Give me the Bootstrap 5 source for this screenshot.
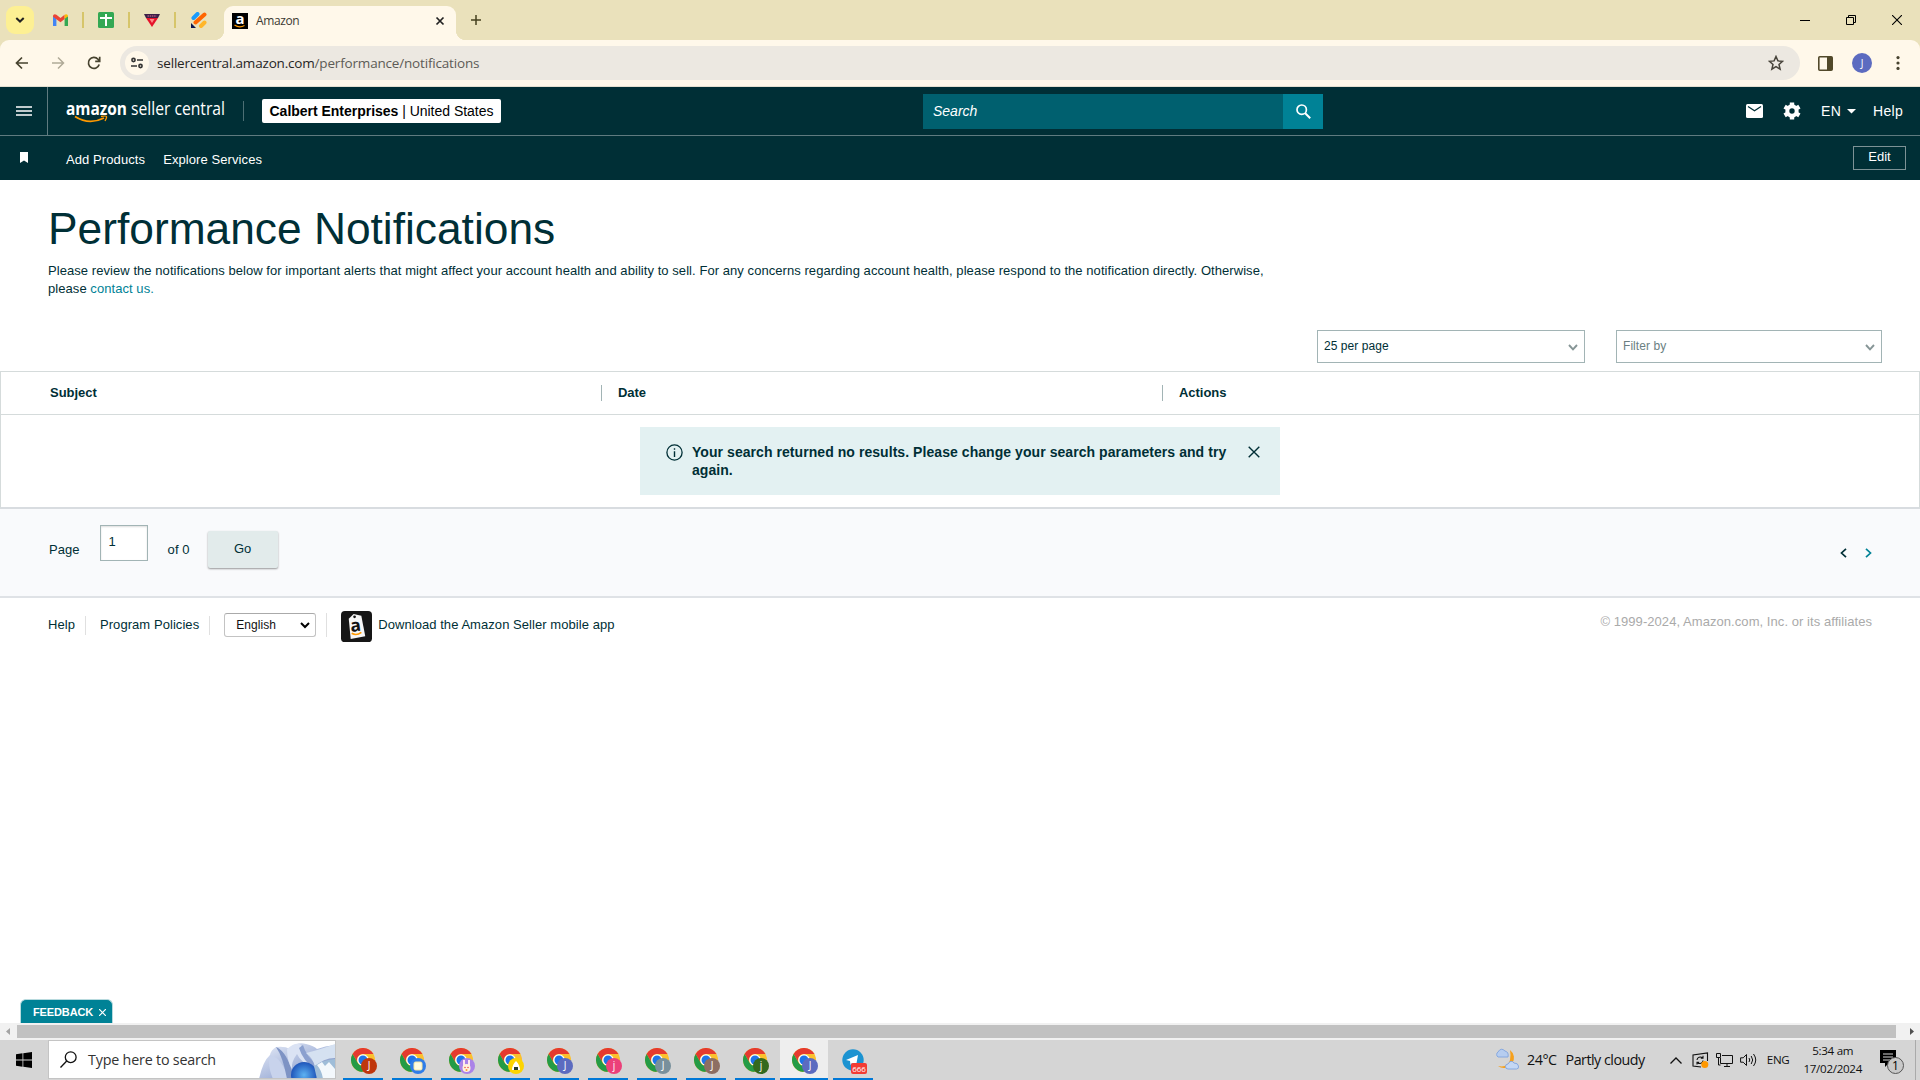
<!DOCTYPE html>
<html lang="en">
<head>
<meta charset="utf-8">
<meta name="viewport" content="width=device-width, initial-scale=1">
<title>Amazon</title>
<link href="https://cdn.jsdelivr.net/npm/bootstrap@5.3.0/dist/css/bootstrap.min.css" rel="stylesheet">
<style>
body{width:1920px;height:1080px;overflow:hidden;font-family:"Liberation Sans",Arial,sans-serif;font-size:13px;line-height:18px;color:#002f36;background:#fff}
svg{display:block;flex:none}
.ui-font{font-family:"Open Sans","Noto Sans",sans-serif}
.fit{white-space:nowrap;letter-spacing:.06px}
/* browser frame */
.tab-strip{height:40px;background:#eae1bb}
.tab-search{width:28px;height:28px;margin:6px 0 0 6px;border-radius:9px;background:#fdf093}
.pin{width:46px;height:40px;border-right:2px solid #d6c56a;border-image:linear-gradient(transparent 30%,#d6c56a 30% 70%,transparent 70%) 1}
.pin-first{width:50px;padding-left:4px}
.pin-last{border:0}
.live-tab{width:232px;height:34px;margin:6px 0 0 2px;background:#fff8ea;border-radius:9px 9px 0 0;padding:0 11px 4px 8px;position:relative;font-size:12px;color:#3c3a33}
.live-tab .fit{letter-spacing:-.4px}
.live-tab::before,.live-tab::after{content:"";position:absolute;bottom:0;width:10px;height:10px}
.live-tab::before{left:-10px;background:radial-gradient(circle at 0 0,transparent 10px,#fff8ea 10.5px)}
.live-tab::after{right:-10px;background:radial-gradient(circle at 100% 0,transparent 10px,#fff8ea 10.5px)}
.tool-row{height:47px;background:#fff8ea;border-bottom:1px solid #e3dfd0;border-radius:9px 9px 0 0}
.frame-bg{background:#eae1bb}
.omni{width:1680px;height:34px;margin-left:19px;border-radius:17px;background:#ece8e1;padding:0 16px 0 5px;font-size:13.5px;color:#5d5b56}
.url{letter-spacing:-.18px}
.site-info{width:24px;height:24px;border-radius:50%;background:#fff8ea}
.avatar{width:20px;height:20px;border-radius:50%;background:#5c6bc0;color:#fff;font-size:10px}
/* site header */
.sc-head{height:49px;background:#002f36;border-bottom:1px solid #5f7b80;color:#fff;font-size:14px}
.burger{width:48px;height:48px;border-right:1px solid #5f7b80}
.v-rule{width:1px;height:20px;background:#4d6f74}
.acct{width:239px;height:24px;border-radius:2px;background:#fff;color:#000;white-space:nowrap}
.acct .fit{letter-spacing:-.02px}
.find{width:360px;height:35px;background:#00606f;padding-left:10px;font-style:italic}
.find-go{width:40px;height:35px;background:#008296}
.wide{letter-spacing:.28px}
.sc-sub{height:44px;background:#002f36;color:#fff}
.sc-sub .fit{margin-top:3px;letter-spacing:.09px}
.edit-btn{width:53px;height:24px;border:1px solid #7d9296;border-radius:0;color:#fff;font-size:13px;line-height:1;padding:0 0 2px;margin:-1px 14px 0 0}
/* page body */
.page-title{font-size:44.3px;line-height:52px;font-weight:400;margin:0;color:#002f36;white-space:nowrap}
.intro{width:1230px;margin-top:7px}
.tealink{color:#008296;text-decoration:none}
.drop{height:33px;border:1px solid #a2b4b5;font-size:12px;padding:0 6px 1px;color:#002f36}
.drop svg{margin-top:3px}
.grid-box{height:138px;border:1px solid #d5dbdb;border-bottom:2px solid #d8dce0}
.grid-head{height:43px;border-bottom:1px solid #d5dbdb;font-weight:700}
.grid-head .fit{letter-spacing:-.03px}
.grid-head .cell{border-left:1px solid #a2b4b5;height:16px;line-height:16px;padding-left:16px}
.notice{width:640px;height:68px;background:#e3f1f2;font-size:14px;font-weight:700;padding:16px 18px 0 26px}
.pager{height:89px;background:#f9fafc;border-bottom:2px solid #dfe2e6;padding:16px 48px 0 49px}
.pg-in{width:48px;height:36px;border:1px solid #a2b4b5;background:#fff;padding:7px 8px;box-shadow:inset 0 1px 2px #0002}
.go-btn{width:70px;height:37px;background:#e2ebeb;border:0;border-radius:2px;font-size:13px;color:#002f36;box-shadow:0 1px 2px #0006;padding:0 0 2px}
.f-rule{width:1px;height:19px;background:#e0e0e0}
.lang{width:92px;height:24px;border:1px solid #c3c3c3;border-top-color:#aaa;border-radius:3px;background:#fff;padding:0 5px 0 11px;color:#111;font-size:12px}
.copy{color:#aaa}
.feedback{width:93px;height:24px;margin-left:20px;background:#008296;border:1px solid #b8dade;border-bottom:0;border-radius:6px 6px 0 0;color:#fff;font-size:11px;font-weight:700;padding:1px 6px 0 12px}
.feedback .fit{letter-spacing:-.12px}
/* scroll bar and taskbar */
.scroller{height:17px;background:#f1f1f1}
.thumb{width:1879px;height:13px;background:#c1c1c1}
.taskbar{height:40px;background:#d5d5d5;color:#111}
.os-find{width:288px;height:39px;background:#fff;border:1px solid #c4c4c4;font-size:14.3px;color:#333;padding-left:11px;overflow:hidden}
.os-find .fit{letter-spacing:-.19px}
.app{width:40px;height:40px;border-bottom:2px solid #0078d7;padding:8px 0 0 8px;position:relative;font-size:9px;color:#fff}
.app-on{width:48px;margin:0 -4px;padding-left:12px;background:#eee}
.who{position:absolute;right:6px;bottom:4px;width:16px;height:16px;border-radius:50%;line-height:15px;text-align:center;font-size:10px}
.app-on .who{right:10px}
.count{position:absolute;left:18px;top:23px;width:16px;height:11px;border-radius:2px;background:#f23c34;font-size:8px;line-height:11px;text-align:center}
.weather{font-size:14.3px;letter-spacing:-.5px}
.tray{font-size:11.6px;letter-spacing:-.3px}
</style>
</head>
<body class="d-flex flex-column">
<svg width="0" height="0" class="position-absolute">
<defs>
<symbol id="chrome" viewBox="0 0 24 24"><circle cx="12" cy="12" r="12" fill="#fbc02d"/><path d="M1.6 6A12 12 0 0 1 22.4 6H12a6 6 0 0 0-5.2 9z" fill="#e53a2f"/><path d="M1.6 6 6.8 15A6 6 0 0 0 14 17.6L11.5 24A12 12 0 0 1 1.6 6z" fill="#249b46"/><circle cx="12" cy="12" r="5.8" fill="#fff"/><circle cx="12" cy="12" r="4.5" fill="#1f74e8"/></symbol>
</defs></svg>

<div class="tab-strip d-flex ui-font">
  <div class="tab-search d-flex align-items-center justify-content-center"><svg width="10" height="6" viewBox="0 0 10 6"><path d="M1.3 1 5 4.5 8.7 1" fill="none" stroke="#222" stroke-width="2"/></svg></div>
  <div class="pin pin-first d-flex align-items-center justify-content-center"><svg width="15" height="12" viewBox="0 0 15 12"><path d="M0 2v10h3.4V4z" fill="#4285f4"/><path d="M15 2v10h-3.4V4z" fill="#34a853"/><path d="M0 2.2C0 .3 1.9-.4 3.4.8L7.500 4 11.600.8v4.200L7.500 8.200 0 2.800z" fill="#ea4335"/><path d="M11.600.8C13.100-.4 15 .3 15 2.200L11.600 5z" fill="#fbbc04"/></svg></div>
  <div class="pin d-flex align-items-center justify-content-center"><svg width="16" height="16" viewBox="0 0 16 16"><rect width="16" height="16" rx="1.500" fill="#34a853"/><path d="M2 6h12M8 2v12" stroke="#fff" stroke-width="2"/></svg></div>
  <div class="pin d-flex align-items-center justify-content-center"><svg width="16" height="13" viewBox="0 0 16 13"><path d="M0 0h16L14 4H2z" fill="#3b2047"/><path d="M2 4h12L8 13z" fill="#e5132a"/><path d="M3.500 2h9" stroke="#e36a93" stroke-dasharray="1.500 .7"/><path d="M5.500 5h5L8 9z" fill="#f88"/></svg></div>
  <div class="pin pin-last d-flex align-items-center justify-content-center"><svg width="16" height="16" viewBox="0 0 16 16"><g stroke-linecap="round" stroke-width="4"><path d="m2.500 6 4-4" stroke="#1a9bfc"/><path d="m4.500 10.500 9-8" stroke="#ff6500"/><path d="m10 14 3.500-3.500" stroke="#ffb629"/></g><path d="M0 11v5h5z" fill="#0a1551"/></svg></div>
  <div class="live-tab d-flex align-items-center"><svg width="16" height="16" viewBox="0 0 16 16"><rect width="16" height="16"/><text x="8" y="11" text-anchor="middle" font-family="Open Sans" font-weight="700" font-size="15" fill="#fff">a</text><path d="M2.500 12q5 3.500 10 .5" stroke="#f90" stroke-width="1.200" fill="none"/></svg><span class="fit ms-2">Amazon</span><svg class="ms-auto" width="10" height="10" viewBox="0 0 10 10"><path d="m1.500 1.500 7 7m0-7-7 7" stroke="#222" stroke-width="1.700"/></svg></div>
  <svg class="align-self-center" style="margin-left:14px" width="12" height="12" viewBox="0 0 12 12"><path d="M6 1v10M1 6h10" stroke="#45401f" stroke-width="1.500"/></svg>
  <div class="d-flex align-items-center ms-auto" style="gap:36px;margin-right:18px">
    <svg width="10" height="10" viewBox="0 0 10 10"><path d="M0 5.500h10" stroke="#000"/></svg>
    <svg width="10" height="10" viewBox="0 0 10 10"><path d="M.5 2.500h7v7h-7zM2.500 2V.5h7v7H8" fill="none" stroke="#000"/></svg>
    <svg width="10" height="10" viewBox="0 0 10 10"><path d="m0 0 10 10M10 0 0 10" stroke="#000" stroke-width="1.100"/></svg>
  </div>
</div>
<div class="frame-bg"><div class="tool-row d-flex align-items-center ui-font">
  <svg style="margin-left:15px" width="14" height="14" viewBox="0 0 14 14"><path d="M13 7H2M7 1.500 1.500 7 7 12.500" fill="none" stroke="#47432f" stroke-width="1.700"/></svg>
  <svg style="margin-left:22px" width="14" height="14" viewBox="0 0 14 14"><path d="M1 7h11M7 1.500 12.500 7 7 12.500" fill="none" stroke="#b0aa98" stroke-width="1.500"/></svg>
  <svg style="margin-left:22px" width="14" height="14" viewBox="0 0 14 14"><path d="M12.200 8.500A5.500 5.500 0 1 1 11 3.200L12.500 5M12.700.8V5.300H8.200" fill="none" stroke="#47432f" stroke-width="1.700"/></svg>
  <div class="omni d-flex align-items-center">
    <div class="site-info d-flex align-items-center justify-content-center"><svg width="12" height="12" viewBox="0 0 12 12" fill="none" stroke="#333" stroke-width="1.600"><circle cx="2.500" cy="3" r="1.600"/><path d="M6 3h6M0 9h6"/><circle cx="9.500" cy="9" r="1.600"/></svg></div>
    <span class="fit url" style="margin-left:8px;letter-spacing:-.18px"><span style="color:#26241f">sellercentral.amazon.com</span>/performance/notifications</span>
    <svg class="ms-auto" width="16" height="16" viewBox="0 0 16 16"><path d="m8 1.500 1.900 4.400 4.700.4-3.600 3.100 1.100 4.700L8 11.600l-4.100 2.500L5 9.400 1.400 6.300l4.700-.4z" fill="none" stroke="#47433a" stroke-width="1.500"/></svg>
  </div>
  <svg style="margin-left:18px" width="15" height="15" viewBox="0 0 15 15"><rect x=".8" y=".8" width="13.400" height="13.400" rx="1" fill="none" stroke="#51492a" stroke-width="1.600"/><path d="M9 1h5v13H9z" fill="#51492a"/></svg>
  <div class="avatar d-flex align-items-center justify-content-center" style="margin-left:19px">J</div>
  <svg style="margin-left:24px" width="4" height="14" viewBox="0 0 4 14" fill="#47432f"><circle cx="2" cy="1.600" r="1.600"/><circle cx="2" cy="7" r="1.600"/><circle cx="2" cy="12.400" r="1.600"/></svg>
</div></div>

<header class="sc-head d-flex align-items-center">
  <div class="burger d-flex align-items-center justify-content-center"><svg width="16" height="10" viewBox="0 0 16 10"><path d="M0 1h16M0 5h16M0 9h16" stroke="#fff" stroke-width="1.600"/></svg></div>
  <svg style="margin-left:18px" width="160" height="30" viewBox="0 0 160 30"><text x="0" y="19" font-family="Open Sans" font-size="17.500" font-weight="700" fill="#fff" textLength="61" lengthAdjust="spacingAndGlyphs">amazon</text><text x="65" y="19" font-family="Open Sans" font-size="18" fill="#fff" textLength="94" lengthAdjust="spacingAndGlyphs">seller central</text><path d="M9 20.500q14 9 29 1.500" fill="none" stroke="#f90" stroke-width="1.800"/><path d="M35 20.500q5-1 5.500 0t-1.500 4.500" fill="none" stroke="#f90" stroke-width="1.300"/></svg>
  <div class="v-rule" style="margin-left:17px"></div>
  <div class="acct d-flex align-items-center justify-content-center" style="margin-left:18px"><span class="fit"><b>Calbert Enterprises</b> | United States</span></div>
  <div class="find d-flex align-items-center" style="margin-left:422px"><span>Search</span></div>
  <div class="find-go d-flex align-items-center justify-content-center"><svg width="15" height="15" viewBox="0 0 15 15" fill="none" stroke="#fff" stroke-width="1.700"><circle cx="5.700" cy="5.700" r="4.700"/><path d="m9 9 5.200 5.200" stroke-width="2"/></svg></div>
  <div class="d-flex align-items-center ms-auto wide" style="margin-right:17px">
    <svg width="17" height="14" viewBox="0 0 17 14"><rect width="17" height="14" rx="1.500" fill="#fff"/><path d="m2 2.500 6.500 4.300L15 2.500" fill="none" stroke="#002f36" stroke-width="1.300"/></svg>
    <svg style="margin-left:20px" width="18" height="18" viewBox="0 0 18 18"><circle cx="9" cy="9" r="4.700" fill="none" stroke="#fff" stroke-width="4"/><g stroke="#fff" stroke-width="4.400"><path d="M9 .5v3M9 14.500v3M1.600 4.700l2.600 1.500M13.800 11.800l2.600 1.500M1.600 13.300l2.600-1.500M13.800 6.200l2.600-1.500"/></g></svg>
    <span style="margin-left:20px">EN</span>
    <svg style="margin-left:6px" width="9" height="5" viewBox="0 0 9 5"><path d="M0 0h9L4.500 4.500z" fill="#fff"/></svg>
    <span style="margin-left:17px">Help</span>
  </div>
</header>
<nav class="sc-sub d-flex align-items-center">
  <svg style="margin:-1px 0 0 20px" width="8" height="11" viewBox="0 0 8 11"><path d="M0 0h8v11L4 8.500 0 11z" fill="#fff"/></svg>
  <span class="fit" style="margin-left:38px">Add Products</span>
  <span class="fit" style="margin-left:18px">Explore Services</span>
  <button class="btn edit-btn ms-auto">Edit</button>
</nav>

<main>
  <div style="padding:23px 48px 0">
    <h1 class="page-title">Performance Notifications</h1>
    <p class="intro mb-0"><span class="fit">Please review the notifications below for important alerts that might affect your account health and ability to sell. For any concerns regarding account health, please respond to the notification directly. Otherwise,</span><br><span class="fit">please <a class="tealink" href="#">contact us.</a></span></p>
  </div>
  <div class="d-flex justify-content-end" style="gap:31px;padding:32px 38px 8px 0">
    <div class="drop d-flex align-items-center" style="width:268px"><span class="fit">25 per page</span><svg class="ms-auto" width="10" height="7" viewBox="0 0 10 7"><path d="m1 1 4 4.300L9 1" fill="none" stroke="#869596" stroke-width="1.900"/></svg></div>
    <div class="drop d-flex align-items-center" style="width:266px"><span class="fit" style="color:#6b7f82">Filter by</span><svg class="ms-auto" width="10" height="7" viewBox="0 0 10 7"><path d="m1 1 4 4.300L9 1" fill="none" stroke="#869596" stroke-width="1.900"/></svg></div>
  </div>
  <section class="grid-box">
    <div class="grid-head d-flex align-items-center"><div style="width:600px;padding-left:49px"><span class="fit">Subject</span></div><div class="cell" style="width:561px"><span class="fit">Date</span></div><div class="cell"><span class="fit">Actions</span></div></div>
    <div class="notice d-flex align-items-start mx-auto" style="margin-top:12px">
      <svg style="margin-top:1px" width="17" height="17" viewBox="0 0 17 17"><circle cx="8.500" cy="8.500" r="7.600" fill="none" stroke="#002f36" stroke-width="1.300"/><path d="M8.500 7.300V13M8.500 4.300v1.500" stroke="#002f36" stroke-width="1.400"/></svg>
      <div style="margin-left:9px"><span class="fit">Your search returned no results. Please change your search parameters and try</span><br><span class="fit">again.</span></div>
      <svg class="ms-auto" style="margin-top:3px;margin-right:2px" width="12" height="12" viewBox="0 0 12 12"><path d="m.7.7 10.600 10.600m0-10.600L.7 11.300" stroke="#002f36" stroke-width="1.400"/></svg>
    </div>
  </section>
  <div class="pager d-flex">
    <span class="fit" style="margin-top:16px">Page</span>
    <div class="pg-in" style="margin-left:20px;margin-top:0">1</div>
    <span class="fit" style="margin:16px 0 0 20px">of 0</span>
    <button class="btn go-btn" style="margin:6px 0 0 18px">Go</button>
    <div class="d-flex ms-auto" style="gap:18px;margin-top:23px"><svg width="7" height="10" viewBox="0 0 7 10"><path d="M6 .8 1.500 5 6 9.200" fill="none" stroke="#002f36" stroke-width="1.700"/></svg><svg width="7" height="10" viewBox="0 0 7 10"><path d="M1 .8 5.500 5 1 9.200" fill="none" stroke="#008296" stroke-width="1.700"/></svg></div>
  </div>
  <footer class="d-flex align-items-center" style="padding:10px 48px 0;height:44px">
    <span class="fit">Help</span><i class="f-rule" style="margin-left:10px"></i>
    <span class="fit" style="margin-left:14px">Program Policies</span><i class="f-rule" style="margin-left:10px"></i>
    <div class="lang d-flex align-items-center" style="margin-left:14px"><span class="fit">English</span><svg class="ms-auto" width="10" height="7" viewBox="0 0 10 7"><path d="m1 1 4 4 4-4" fill="none" stroke="#000" stroke-width="2"/></svg></div><i class="f-rule" style="margin-left:10px;height:24px"></i>
    <svg style="margin-left:14px;margin-top:3px" width="31" height="31" viewBox="0 0 32 32"><rect width="32" height="32" rx="4" fill="#161616"/><path d="m8 8 5-5 8 2 4 21-15 3z" fill="#f7f7f7"/><circle cx="14" cy="6" r="1.400" fill="#161616"/><text x="15.500" y="21" text-anchor="middle" transform="rotate(-7 15 20)" font-family="Open Sans" font-weight="700" font-size="18" fill="#111">a</text><path d="M11 23q5 3 10-1" stroke="#f90" stroke-width="1.600" fill="none"/></svg>
    <span class="fit" style="margin-left:6px">Download the Amazon Seller mobile app</span>
    <span class="copy fit ms-auto" style="margin-top:-7px">© 1999-2024, Amazon.com, Inc. or its affiliates</span>
  </footer>
</main>

<div class="mt-auto">
  <div class="feedback d-flex align-items-center"><span class="fit">FEEDBACK</span><svg class="ms-auto" width="7" height="7" viewBox="0 0 7 7"><path d="m0 0 7 7m0-7L0 7" stroke="#fff" stroke-width="1.200"/></svg></div>
  <div class="scroller d-flex align-items-center"><svg style="margin:0 7px 0 6px" width="4" height="7" viewBox="0 0 4 7"><path d="M4 0v7L0 3.500z" fill="#a3a3a3"/></svg><div class="thumb"></div><svg style="margin-left:14px" width="4" height="7" viewBox="0 0 4 7"><path d="M0 0v7l4-3.500z" fill="#505050"/></svg></div>
  <div class="taskbar d-flex ui-font">
    <svg style="margin:12px 16px 0" width="16" height="16" viewBox="0 0 16 16"><path d="M0 2.200 6.500 1.300v6.200H0zM7.300 1.200 16 0v7.500H7.300zM0 8.400h6.500v6.300L0 13.800zM7.300 8.400H16V16l-8.700-1.200z"/></svg>
    <div class="os-find d-flex align-items-center"><svg width="17" height="17" viewBox="0 0 17 17" fill="none" stroke="#111" stroke-width="1.300"><circle cx="10.700" cy="6.200" r="5.400"/><path d="M6.700 10 .5 16.500"/></svg><span class="fit" style="margin-left:11px">Type here to search</span>
      <svg class="ms-auto" width="76" height="38" viewBox="0 0 76 38"><defs><linearGradient id="fold" x2="1" y2="1"><stop stop-color="#e9eef9"/><stop offset=".55" stop-color="#a9b8dc"/><stop offset="1" stop-color="#5e76ae"/></linearGradient><radialGradient id="orb"><stop stop-color="#5db2f2"/><stop offset="1" stop-color="#1f55ba"/></radialGradient></defs><path d="M0 38Q4 20 11 14q1-5 6-8 9-1 14 2Q38 0 47 3q8 2 11 5 8-3 18-4v34z" fill="url(#fold)"/><path d="M11 14q8 2 13 11t7 13H14Q8 24 11 14z" fill="#c8d3ec"/><path d="M17 6q12 5 18 32h-7Q24 16 17 6z" fill="#7e93c4"/><path d="M28 8q9-8 14-4 0 12 12 22-12-4-16-13-6 8-5 15-5-8-5-20z" fill="#dbe3f4"/><path d="M44 4q3 11 14 20l-2 4Q44 20 40 7z" fill="#8ba0cf"/><circle cx="45" cy="34" r="13" fill="url(#orb)"/><path d="M47 12q13-3 29-9v14q-12 0-20 9-2-9-9-14z" fill="#d5e1f1"/><path d="M55 25q9-6 21-7v20H58z" fill="#9fbdd8"/><path d="m58 24 5-3 3 4 4-4 6 7v10H64q-1-8-6-14z" fill="#f3f8fc"/></svg>
    </div>
    <div class="d-flex" style="gap:9px;margin-left:7px">
      <div class="app"><svg width="24" height="24"><use href="#chrome"/></svg><span class="who" style="background:#bf360c">J</span></div>
      <div class="app"><svg width="24" height="24"><use href="#chrome"/></svg><span class="who" style="background:#2f7de9"><svg width="16" height="16" viewBox="0 0 16 16"><rect x="4" y="4" width="8" height="8" rx="1.500" fill="#fffbe0" stroke="#f6e7a0"/></svg></span></div>
      <div class="app"><svg width="24" height="24"><use href="#chrome"/></svg><span class="who" style="background:#ab83e8"><svg width="16" height="16" viewBox="0 0 16 16"><path d="M5 2v8M10 2v8" stroke="#fde7ef" stroke-width="2"/><circle cx="7.500" cy="10" r="4" fill="#fff3dd"/><circle cx="6" cy="9.500" r=".8" fill="#e55"/><circle cx="9" cy="9.500" r=".8" fill="#e55"/><circle cx="7.500" cy="12" r="1" fill="#f93"/></svg></span></div>
      <div class="app"><svg width="24" height="24"><use href="#chrome"/></svg><span class="who" style="background:#fdd400"><svg width="16" height="16" viewBox="0 0 16 16"><path d="M8 3q4 4 4 9H4q0-5 4-9z" fill="#fff"/><path d="M6 9h4v3H6z" fill="#263c2b"/></svg></span></div>
      <div class="app"><svg width="24" height="24"><use href="#chrome"/></svg><span class="who" style="background:#5c6bc0">J</span></div>
      <div class="app"><svg width="24" height="24"><use href="#chrome"/></svg><span class="who" style="background:#ec407a">j</span></div>
      <div class="app"><svg width="24" height="24"><use href="#chrome"/></svg><span class="who" style="background:#78909c">J</span></div>
      <div class="app"><svg width="24" height="24"><use href="#chrome"/></svg><span class="who" style="background:#8d6e63">J</span></div>
      <div class="app"><svg width="24" height="24"><use href="#chrome"/></svg><span class="who" style="background:#33691e">j</span></div>
      <div class="app app-on"><svg width="24" height="24"><use href="#chrome"/></svg><span class="who" style="background:#5c6bc0">J</span></div>
      <div class="app"><svg width="24" height="24" viewBox="0 0 24 24"><circle cx="12" cy="12" r="10.700" fill="#1c93d1"/><path d="m5 12 12-5-2 11-4-3-1.500 2-.5-4z" fill="#fff"/></svg><span class="count">666</span></div>
    </div>
    <div class="d-flex align-items-center ms-auto text-nowrap">
      <svg width="24" height="24" viewBox="0 0 24 24"><path d="M15 2a10 10 0 1 1-12 16q10 2 12-6 1-5 0-10z" fill="#f6a01c"/><path d="M3 9a3 3 0 0 1 0-5q3-5 7-1 4 1 3 6z" fill="#b6cdf0" stroke="#86a8e0"/><path d="M13 21a2.500 2.500 0 0 1 0-5q3-5 6-1 4 0 4.500 3t-2 3z" fill="#c4d7f4" stroke="#86a8e0"/></svg>
      <span class="weather" style="margin-left:8px">24°C</span><span class="weather" style="margin-left:9px">Partly cloudy</span>
      <svg style="margin-left:25px" width="12" height="7" viewBox="0 0 12 7"><path d="m.5 6.500 5.500-5.500 5.500 5.500" fill="none" stroke="#111" stroke-width="1.300"/></svg>
      <svg style="margin-left:10px" width="17" height="16" viewBox="0 0 17 16"><path d="M15.500 9V1L1 3v11l8 1M5 8A3.200 3.200 0 0 1 10.500 6M11 8.500A3.200 3.200 0 0 1 5.500 10.500M11 3.800v2.400H8.800M5 12.500V10.200H7.200" fill="none" stroke="#111" stroke-width="1.100"/><circle cx="12.800" cy="12.500" r="3.500" fill="#ff9800"/></svg>
      <svg style="margin-left:7px" width="17" height="14" viewBox="0 0 17 14"><path d="M6 2.500h10.500v8H4.500V5M8 13.500h6M11 10.500v3M.5.500h4v4h-4zM2.500 5v7h2" fill="none" stroke="#111"/></svg>
      <svg style="margin-left:7px" width="17" height="14" viewBox="0 0 17 14"><path d="M.6 4.800h2.600L6.500 1.500v11L3.200 9.200H.6zM9 5q1.500 2 0 4M11.200 3q3 4 0 8M13.500 1q4.500 6 0 12" fill="none" stroke="#111"/></svg>
      <span class="tray" style="margin-left:10px">ENG</span>
      <div class="tray text-center" style="margin-left:14px"><span>5:34 am</span><br><span>17/02/2024</span></div>
      <svg style="margin-left:18px;margin-top:2px" width="25" height="25" viewBox="0 0 25 25"><path d="M0 1h16v13H9l-4 4v-4H0z"/><path d="M3 5h10M3 8h10M3 11h7" stroke="#d5d5d5"/><circle cx="15.500" cy="16.500" r="8" fill="#c9c9c9" stroke="#555"/><text x="15.500" y="21" text-anchor="middle" font-size="12" font-family="Open Sans">1</text></svg>
      <div style="width:1px;height:40px;background:#aaa;margin:0 4px 0 10px"></div>
    </div>
  </div>
</div>
<script src="https://cdn.jsdelivr.net/npm/bootstrap@5.3.0/dist/js/bootstrap.bundle.min.js"></script>
</body>
</html>
